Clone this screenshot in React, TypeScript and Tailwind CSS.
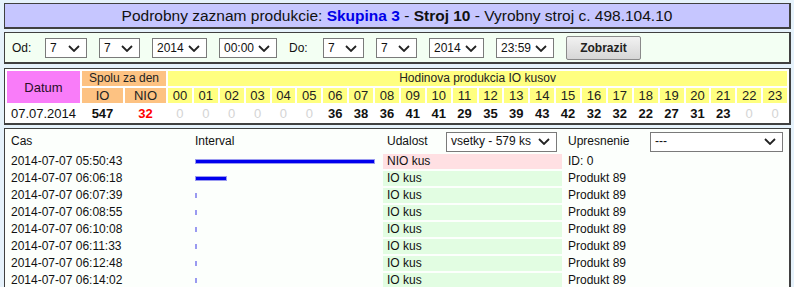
import React from "react";

// hourly output, 0 shown greyed out
const hours = [0, 0, 0, 0, 0, 0, 36, 38, 36, 41, 41, 29, 35, 39, 43, 42, 32, 32, 22, 27, 31, 23, 0, 0];

const events = [
  { time: "2014-07-07 05:50:43", bar: 180, nio: true, info: "ID: 0" },
  { time: "2014-07-07 06:06:18", bar: 32, nio: false, info: "Produkt 89" },
  { time: "2014-07-07 06:07:39", bar: 2, nio: false, info: "Produkt 89" },
  { time: "2014-07-07 06:08:55", bar: 2, nio: false, info: "Produkt 89" },
  { time: "2014-07-07 06:10:08", bar: 2, nio: false, info: "Produkt 89" },
  { time: "2014-07-07 06:11:33", bar: 2, nio: false, info: "Produkt 89" },
  { time: "2014-07-07 06:12:48", bar: 2, nio: false, info: "Produkt 89" },
  { time: "2014-07-07 06:14:02", bar: 2, nio: false, info: "Produkt 89" },
];

function Chevron() {
  return (
    <svg width="12" height="7" viewBox="0 0 12 7" className="shrink-0">
      <polyline points="1,1 6,6 11,1" fill="none" stroke="#222" strokeWidth="1.8" />
    </svg>
  );
}

function Select({ value, className }: { value: string; className: string }) {
  return (
    <div
      className={`flex h-[20px] items-center justify-between border border-[#7a7a7a] bg-white pl-[4px] pr-[6px] text-[12px] text-[#111] ${className}`}
    >
      <span>{value}</span>
      <Chevron />
    </div>
  );
}

const box = "ml-[4px] mr-[3px] border-t border-l border-r-2 border-b-2 border-[#404040]";

export default function App() {
  return (
    <div
      className="h-[287px] overflow-hidden bg-[#e6f2fb] pt-[3px] text-[12px] text-[#111]"
      style={{ fontFamily: '"Liberation Sans", Arial, sans-serif' }}
    >
      {/* title */}
      <div className={`${box} flex h-[26px] items-center justify-center bg-[#c6c6ff] text-[15.5px]`}>
        <span>
          Podrobny zaznam produkcie: <b className="text-[#0000e8]">Skupina 3</b> - <b>Stroj 10</b> - Vyrobny stroj c.
          498.104.10
        </span>
      </div>

      {/* filter */}
      <div className={`${box} mt-[3px] flex items-center gap-[12px] bg-[#f3fff3] pb-[2px] pl-[7px] pt-[3px]`}>
        <span className="w-[21px]">Od:</span>
        <Select value="7" className="w-[42px]" />
        <Select value="7" className="w-[41px]" />
        <Select value="2014" className="w-[55px]" />
        <Select value="00:00" className="w-[58px]" />
        <span className="w-[22px]">Do:</span>
        <Select value="7" className="w-[41px]" />
        <Select value="7" className="w-[41px]" />
        <Select value="2014" className="w-[55px]" />
        <Select value="23:59" className="w-[58px]" />
        <button className="h-[24px] w-[75px] rounded-[2px] border border-[#8a8a8a] bg-gradient-to-b from-[#f2f2f2] to-[#d6d6d6] text-[12px] font-bold text-[#222]">
          Zobrazit
        </button>
      </div>

      {/* daily summary */}
      <div className={`${box} mt-[4px] bg-white`}>
        <table className="w-full table-fixed border-separate border-spacing-[2px] text-center text-[12px] leading-[15px]">
          <colgroup>
            <col className="w-[73px]" />
            <col className="w-[41px]" />
            <col className="w-[41px]" />
            {hours.map((_, i) => (
              <col key={i} />
            ))}
          </colgroup>
          <tbody>
            <tr className="h-[15px]">
              <td rowSpan={2} className="bg-[#f97cf9] text-[13px] text-[#2a102a]">
                Datum
              </td>
              <td colSpan={2} className="bg-[#fdc282] text-[#222]">
                Spolu za den
              </td>
              <td colSpan={24} className="bg-[#ffff80] text-[#222]">
                Hodinova produkcia IO kusov
              </td>
            </tr>
            <tr className="h-[15px]">
              <td className="bg-[#fdc282] text-[13px] text-[#222]">IO</td>
              <td className="bg-[#fdc282] text-[13px] text-[#222]">NIO</td>
              {hours.map((_, i) => (
                <td key={i} className="bg-[#ffff80] text-[13px] text-[#222]">
                  {String(i).padStart(2, "0")}
                </td>
              ))}
            </tr>
            <tr className="h-[16px] text-[13px]">
              <td className="text-[#111]">07.07.2014</td>
              <td className="font-bold">547</td>
              <td className="font-bold text-[#ff0000]">32</td>
              {hours.map((h, i) => (
                <td key={i} className={h ? "font-bold text-[#111]" : "text-[#d4d4d4]"}>
                  {h}
                </td>
              ))}
            </tr>
          </tbody>
        </table>
      </div>

      {/* events */}
      <div className={`${box} mt-[3px] bg-[#fcfffc]`}>
        <table className="w-full table-fixed border-separate border-spacing-[2px] text-left text-[12px] leading-[15px]">
          <colgroup>
            <col className="w-[182px]" />
            <col className="w-[190px]" />
            <col className="w-[179px]" />
            <col />
          </colgroup>
          <tbody>
            <tr className="h-[21px]">
              <td className="px-[4px]">Cas</td>
              <td className="px-[4px]">Interval</td>
              <td className="pl-[4px] pr-[5px]">
                <div className="flex items-center justify-between">
                  <span>Udalost</span>
                  <Select value="vsetky - 579 ks" className="w-[111px]" />
                </div>
              </td>
              <td className="pl-[4px] pr-[4px]">
                <div className="flex items-center justify-between">
                  <span>Upresnenie</span>
                  <Select value="---" className="w-[133px]" />
                </div>
              </td>
            </tr>
            {events.map((e, i) => (
              <tr key={i} className="h-[15px]">
                <td className="px-[4px]">{e.time}</td>
                <td className="px-[4px]">
                  <div
                    className="h-[5px] border border-[#9a9af0] bg-[#0000ee]"
                    style={{ width: e.bar }}
                  />
                </td>
                <td className={`px-[4px] ${e.nio ? "bg-[#ffe0e3]" : "bg-[#e2fde2]"}`}>
                  {e.nio ? "NIO kus" : "IO kus"}
                </td>
                <td className="px-[4px]">{e.info}</td>
              </tr>
            ))}
          </tbody>
        </table>
      </div>
    </div>
  );
}
